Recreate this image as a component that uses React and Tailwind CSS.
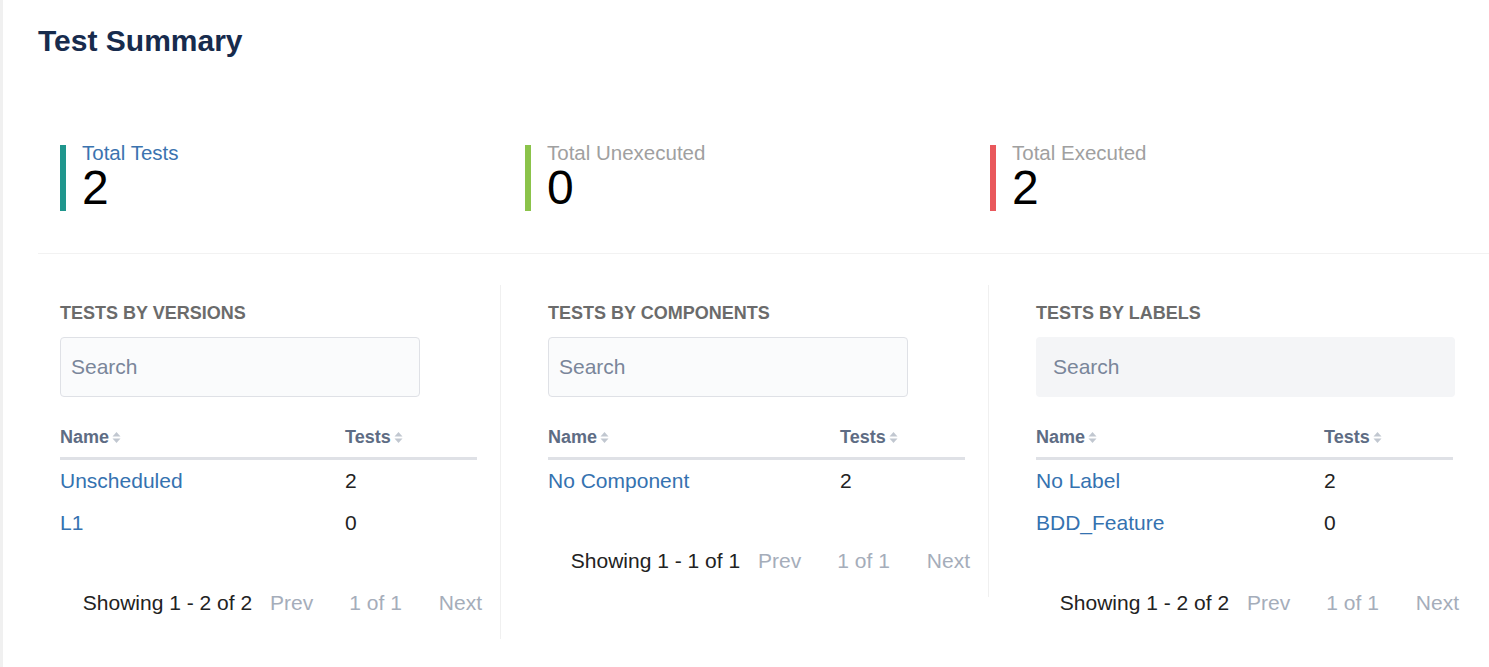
const stats = [
  { label: "Total Tests", value: 2, bar: "border-[#1f968d]", text: "text-[#3b73af]" },
  { label: "Total Unexecuted", value: 0, bar: "border-[#8bc34a]", text: "text-[#a0a0a0]" },
  { label: "Total Executed", value: 2, bar: "border-[#e9585c]", text: "text-[#a0a0a0]" },
];

const panels = [
  {
    title: "Tests by versions",
    rows: [["Unscheduled", 2], ["L1", 0]],
    showing: "Showing 1 - 2 of 2",
    firstCol: "w-[285px]",
    pad: "pl-[22px]",
    width: "w-[463px]",
    border: "border-r border-[#f0f0f0]",
    search: "w-[360px] border border-[#dfe1e6] bg-[#fafbfc] pl-[10px]",
  },
  {
    title: "Tests by components",
    rows: [["No Component", 2]],
    showing: "Showing 1 - 1 of 1",
    firstCol: "w-[292px]",
    pad: "pl-[47px]",
    width: "w-[488px]",
    border: "border-r border-[#f0f0f0]",
    search: "w-[360px] border border-[#dfe1e6] bg-[#fafbfc] pl-[10px]",
  },
  {
    title: "Tests by labels",
    rows: [["No Label", 2], ["BDD_Feature", 0]],
    showing: "Showing 1 - 2 of 2",
    firstCol: "w-[288px]",
    pad: "pl-[47px]",
    width: "w-[488px]",
    border: "",
    search: "w-[419px] bg-[#f4f5f7] pl-[17px]",
  },
];

function SortIcon() {
  return (
    <svg width="9" height="13" viewBox="0 0 9 13" className="ml-[3px] inline-block">
      <path d="M4.5 1 L8.5 5.5 H0.5 Z" fill="#c1c7d0" />
      <path d="M4.5 12 L8.5 7.5 H0.5 Z" fill="#c1c7d0" />
    </svg>
  );
}

function Panel({ p }) {
  return (
    <div className={`${p.width} ${p.pad} ${p.border} pr-[18px] pt-[17px] pb-[24px] flex flex-col`}>
      <h3 className="text-[18px] leading-[22px] font-bold uppercase text-[#6b6b6b]">{p.title}</h3>
      <input
        type="text"
        placeholder="Search"
        className={`${p.search} mt-[13px] h-[60px] rounded-[4px] text-[21px] text-[#333] placeholder:text-[#7a869a] outline-none`}
      />
      <table className="mt-[28px] w-[417px] border-collapse">
        <thead>
          <tr className="border-b-[3px] border-[#dfe1e6]">
            <th className={`${p.firstCol} text-left pb-[8px] text-[18px] leading-[24px] font-bold text-[#5e6c84]`}>
              <span className="inline-flex items-center">
                Name
                <SortIcon />
              </span>
            </th>
            <th className="text-left pb-[8px] text-[18px] leading-[24px] font-bold text-[#5e6c84]">
              <span className="inline-flex items-center">
                Tests
                <SortIcon />
              </span>
            </th>
          </tr>
        </thead>
        <tbody>
          {p.rows.map(([name, n]) => (
            <tr key={name} className="h-[42px]">
              <td className="text-[21px] leading-[24px] pt-[2px] text-[#3572b0]">{name}</td>
              <td className="text-[21px] leading-[24px] pt-[2px] text-[#222]">{n}</td>
            </tr>
          ))}
        </tbody>
      </table>
      <div className="mt-[48px] flex justify-end text-[21px] leading-[24px]">
        <span className="text-[#222]">{p.showing}</span>
        <span className="ml-[18px] text-[#a5adba]">Prev</span>
        <span className="ml-[36px] text-[#a5adba]">1 of 1</span>
        <span className="ml-[37px] text-[#a5adba]">Next</span>
      </div>
    </div>
  );
}

export default function App() {
  return (
    <div className="min-h-screen bg-white border-l-[3px] border-[#f0f0f0] pl-[35px] font-['Liberation_Sans',Arial,sans-serif]">
      <h1 className="pt-[23px] text-[30px] leading-[36px] font-bold text-[#172b4d]">Test Summary</h1>

      <div className="mt-[86px] pl-[22px] pb-[42px] border-b border-[#f2f2f2] flex">
        {stats.map((s) => (
          <div key={s.label} className="w-[465px]">
            <div className={`border-l-[6px] ${s.bar} pl-[16px] h-[66px]`}>
              <div className={`text-[20.5px] leading-[16px] ${s.text}`}>{s.label}</div>
              <div className="text-[48px] leading-[54px] text-black">{s.value}</div>
            </div>
          </div>
        ))}
      </div>

      <div className="mt-[31px] flex items-start">
        {panels.map((p) => (
          <Panel key={p.title} p={p} />
        ))}
      </div>
    </div>
  );
}
